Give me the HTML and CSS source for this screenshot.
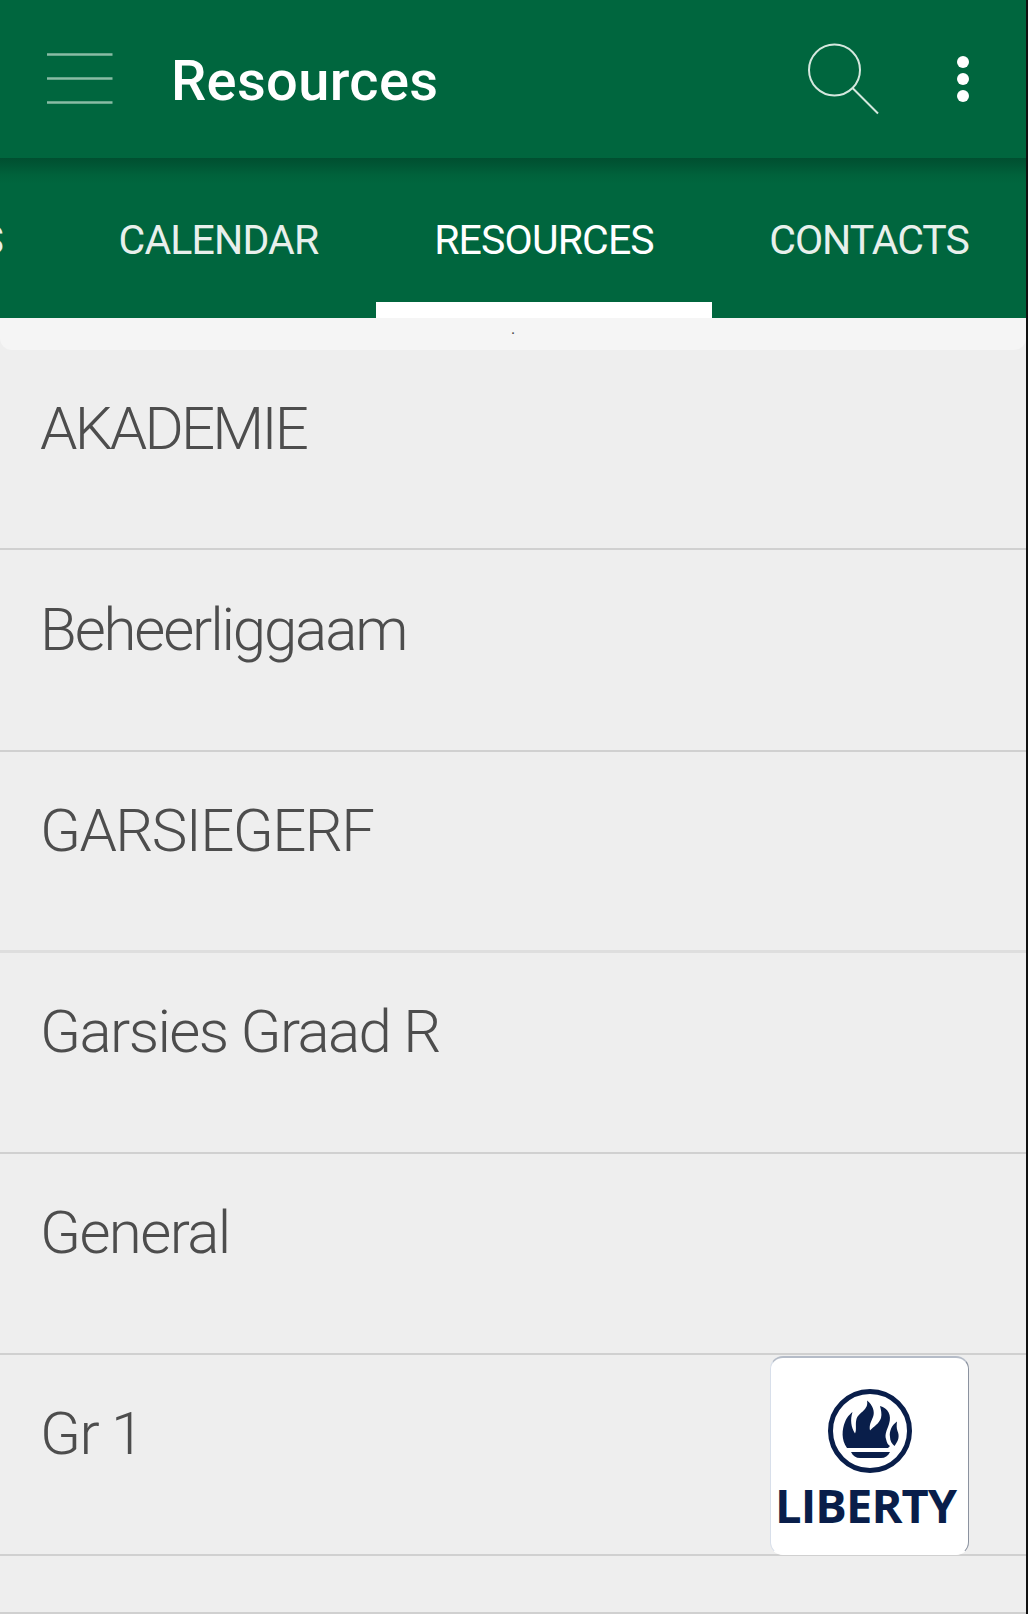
FILE: index.html
```html
<!DOCTYPE html>
<html lang="en">
<head>
    <meta charset="UTF-8">
    <meta name="viewport" content="width=device-width, initial-scale=1.0">
    <title>Resources</title>
    <link rel="stylesheet" href="styles.css">
</head>
<body>
    <div class="screen">
        <header class="toolbar">
            <svg class="menu-icon" width="68" height="56" viewBox="0 0 68 56">
                <path d="M0 2.500H65.500M0 26.500H65.500M0 50.500H65.500"/>
            </svg>
            <h1 class="title">Resources</h1>
            <svg class="search-icon" width="76" height="76" viewBox="0 0 76 76">
                <circle cx="28.500" cy="28" r="25.500"/>
                <path d="M46.500 46L72 71.500"/>
            </svg>
            <svg class="more-icon" width="14" height="50" viewBox="0 0 14 50">
                <circle cx="7" cy="8" r="6"/>
                <circle cx="7" cy="25" r="6"/>
                <circle cx="7" cy="42" r="6"/>
            </svg>
        </header>

        <nav class="tabs">
            <div class="tab tab-previous">NEWS</div>
            <div class="tab tab-calendar">CALENDAR</div>
            <div class="tab tab-resources active">RESOURCES</div>
            <div class="tab tab-contacts">CONTACTS</div>
        </nav>

        <div class="strip">.</div>

        <ul class="list">
            <li class="row"><span class="name name-tight">AKADEMIE</span></li>
            <li class="row"><span class="name name-snug">Beheerliggaam</span></li>
            <li class="row row-soft"><span class="name">GARSIEGERF</span></li>
            <li class="row"><span class="name">Garsies Graad R</span></li>
            <li class="row"><span class="name">General</span></li>
            <li class="row"><span class="name">Gr 1</span></li>
            <li class="row row-last"></li>
        </ul>

        <div class="sponsor">
            <svg class="flame" width="86" height="86" viewBox="0 0 86 86">
                <circle class="ring" cx="43" cy="43" r="39.500"/>
                <path d="M20 60C14 52 15 41 18 34C20 29 22 27 25.500 24C23 32 24 39 28 45.500C30 42 28 36 29.500 31C32 24 42 22 40 12.500C46 17 48 24 46 29C44 34 42 37 43 42.500C47 38 52 36 54 30C55 26 54 22 53 18C61 20 65 27 62 36C60 42 57.500 46 59 51C60 55 61 57 63 58L61 60Z"/>
                <path d="M70 33.500C65 37 62 43 63 49C63 53 65 56 67.500 58C72 52 72.500 48 70.500 43C69.500 40 69.500 37 70 33.500Z"/>
                <path d="M24 64H63C61 68 58 70 54 70H33C29 70 26 68 24 64Z"/>
            </svg>
            <div class="sponsor-name">LIBERTY</div>
        </div>
    </div>
</body>
</html>
```
FILE: styles.css
```css
* {
    box-sizing: border-box;
}

body {
    margin: 0;
    background-color: #111;
    font-family: Roboto, "Liberation Sans", sans-serif;
}

.screen {
    position: relative;
    width: 1026px;
    height: 1614px;
    overflow: hidden;
    background-color: #eee;
}

.toolbar {
    display: flex;
    height: 158px;
    padding-left: 47px;
    background-color: #00663e;
    color: #fff;
}

.menu-icon {
    margin-top: 52px;
    fill: none;
    stroke: #8abca5;
    stroke-width: 2.4;
}

.title {
    flex: 1;
    margin: 48px 0 0 56px;
    font-size: 56px;
    font-weight: 500;
    line-height: 66px;
    letter-spacing: 0.35px;
}

.search-icon {
    margin: 42px 74px 0 0;
    fill: none;
    stroke: #d4e8de;
    stroke-width: 2;
}

.more-icon {
    margin: 54px 56px 0 0;
    fill: #fff;
}

.tabs {
    display: flex;
    justify-content: flex-end;
    height: 160px;
    background: linear-gradient(#004f30 0, #005735 8px, #00623b 17px, #00663e 26px);
}

.tab {
    flex: none;
    width: 315px;
    padding-top: 58px;
    text-align: center;
    font-size: 41px;
    line-height: 48px;
    letter-spacing: -0.85px;
    color: #e8f0ec;
}

.tab-previous {
    padding-right: 58px;
    text-align: right;
}

.tab-resources {
    width: 336px;
}

.tab-contacts {
    width: 314px;
    letter-spacing: -1px;
}

.active {
    border-bottom: 16px solid #fff;
    color: #fff;
}

.strip {
    height: 32px;
    border-radius: 0 0 12px 12px;
    background-color: #f5f5f5;
    text-align: center;
    font-size: 16px;
    line-height: 22px;
    color: #444;
}

.list {
    margin: 0;
    padding: 0;
    list-style: none;
}

.row {
    height: 201px;
    padding: 44px 40px 0;
    border-bottom: 2px solid #d0d0d0;
}

.row:first-child {
    height: 200px;
}

.row:nth-child(2) {
    height: 202px;
    padding-top: 45px;
}

.row-soft {
    border-bottom: 3px solid #dedede;
}

.row-last {
    height: 58px;
    padding: 0;
}

.name {
    display: block;
    font-size: 60px;
    font-weight: 300;
    line-height: 70px;
    letter-spacing: -1.6px;
    color: #4d4d4d;
}

.name-snug {
    letter-spacing: -2.15px;
}

.name-tight {
    letter-spacing: -2.8px;
}

/* ad badge floats over the list */
.sponsor {
    position: absolute;
    left: 770px;
    top: 1356px;
    width: 199px;
    height: 199px;
    padding-top: 30px;
    border: 1px solid #8b929f;
    border-top: 2px solid #b5bcc8;
    border-left-color: #d8dfea;
    border-bottom-color: #fff;
    border-radius: 13px;
    background-color: #fff;
    color: #091e4a;
}

.flame {
    display: block;
    margin: 0 auto;
    fill: #091e4a;
}

.ring {
    fill: none;
    stroke: #091e4a;
    stroke-width: 5;
}

.sponsor-name {
    padding-left: 4px;
    font-family: "Open Sans", "Noto Sans", sans-serif;
    font-size: 47px;
    font-weight: 700;
    line-height: 62px;
    letter-spacing: -0.9px;
}
```
